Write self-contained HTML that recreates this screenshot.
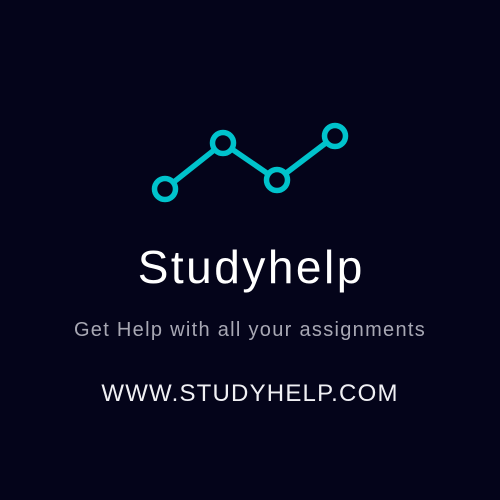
<!DOCTYPE html><html><head><style>
body{margin:0;width:500px;height:500px;background:#04041a;overflow:hidden;font-family:"Liberation Sans",sans-serif;position:relative}
.t{position:absolute;left:0;width:500px;text-align:center;color:#fff}
</style></head><body>
<svg width="500" height="500" style="position:absolute;left:0;top:0">
<g stroke="#00c3cc" stroke-width="5.5" fill="none">
<line x1="165" y1="189" x2="223" y2="143"/><line x1="223" y1="143" x2="277" y2="180"/><line x1="277" y1="180" x2="335" y2="136"/>
<circle cx="165" cy="189" r="10.5" fill="#04041a"/><circle cx="223" cy="143" r="10.5" fill="#04041a"/><circle cx="277" cy="180" r="10.5" fill="#04041a"/><circle cx="335" cy="136" r="10.5" fill="#04041a"/>
</g></svg>
<div class="t" style="top:240px;font-size:46px;line-height:54px;letter-spacing:2.5px;text-indent:2.5px">Studyhelp</div>
<div class="t" style="top:318px;font-size:20px;line-height:24px;color:#a8a8b4;letter-spacing:1.3px">Get Help with all your assignments</div>
<div class="t" style="top:379px;font-size:24px;line-height:30px;color:#f0f0f4;letter-spacing:1.2px">WWW.STUDYHELP.COM</div>
</body></html>
